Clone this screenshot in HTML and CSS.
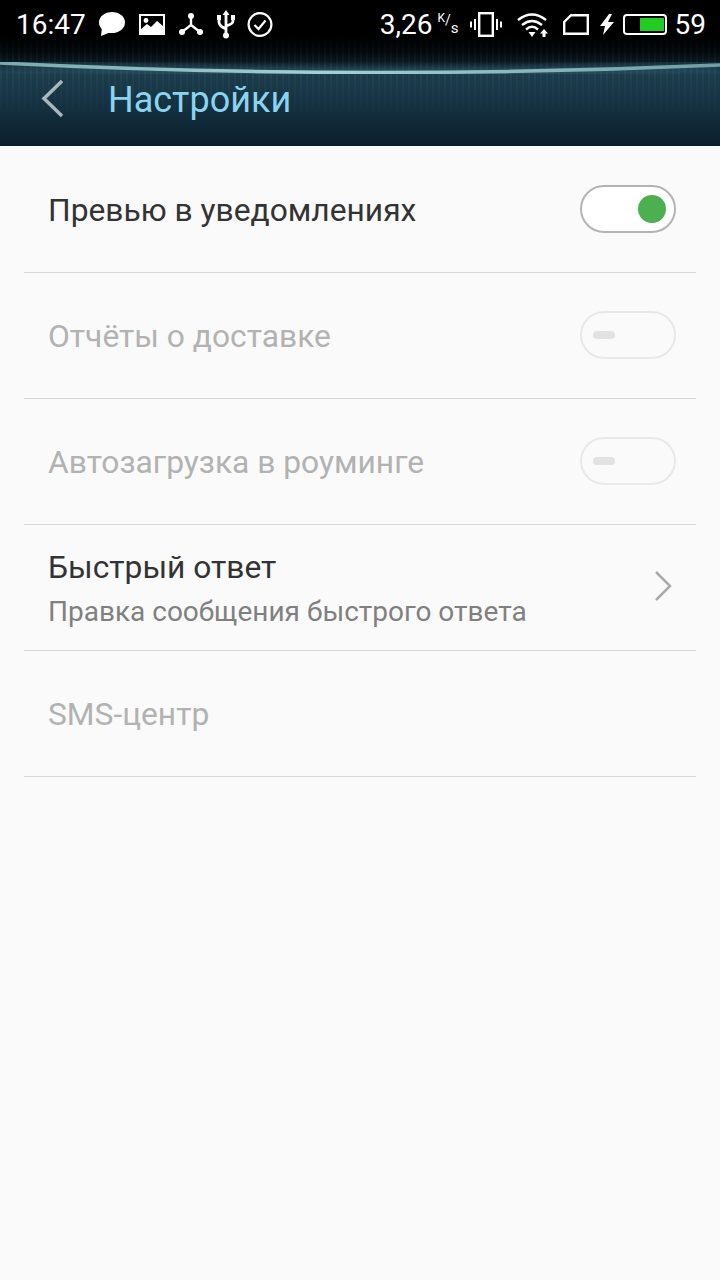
FILE: index.html
```html
<!DOCTYPE html>
<html lang="en">
<head>
    <meta charset="UTF-8">
    <meta name="viewport" content="width=device-width, initial-scale=1.0">
    <title>Настройки</title>
    <link rel="stylesheet" href="styles.css">
</head>
<body>

    <header class="header">
        <div class="streaks"></div>
        <svg class="glow" width="720" height="146" viewBox="0 0 720 146">
            <defs>
                <linearGradient id="ray" x1="0" x2="1" y1="0" y2="0">
                    <stop offset="0" stop-color="#78aab0"/>
                    <stop offset="0.45" stop-color="#a5d0d4"/>
                    <stop offset="1" stop-color="#6f9ea6"/>
                </linearGradient>
                <filter id="soft"><feGaussianBlur stdDeviation="5"/></filter>
                <filter id="softer"><feGaussianBlur stdDeviation="0.7"/></filter>
            </defs>
            <path d="M0 63 Q360 81 720 65" fill="none" stroke="#3f7286" stroke-opacity="0.6" stroke-width="6" filter="url(#soft)"/>
            <path d="M0 63 Q360 81 720 65" fill="none" stroke="url(#ray)" stroke-width="3.500" filter="url(#softer)"/>
        </svg>

        <div class="status-bar">
            <div class="status-left">
                <span class="clock">16:47</span>
                <svg class="icon" width="26" height="24" viewBox="0 0 26 24"><ellipse cx="13" cy="10.500" rx="13" ry="10.500" fill="#fff"/><path d="M3 15 L2 24 L12 20 Z" fill="#fff"/></svg>
                <svg class="icon" width="26" height="21" viewBox="0 0 26 21"><path fill="#fff" fill-rule="evenodd" d="M0 0H26V21H0ZM2 2V15L8 10L12 13L18 7L24 12V2Z"/><circle cx="7" cy="6.500" r="2.400" fill="#fff"/></svg>
                <svg class="icon" width="24" height="22" viewBox="0 0 24 22"><path d="M12 3V12L3 19M12 12L21 19" fill="none" stroke="#fff" stroke-width="2.400"/><circle cx="12" cy="3" r="3" fill="#fff"/><circle cx="3" cy="19" r="3" fill="#fff"/><circle cx="21" cy="19" r="3" fill="#fff"/></svg>
                <svg class="icon" width="18" height="29" viewBox="0 0 18 29"><path d="M9 3V26M2 9V12Q2 16 9 19M16 9V11Q16 14 9 16" fill="none" stroke="#fff" stroke-width="2.800"/><path d="M9 0L12.500 5H5.500Z" fill="#fff"/><rect x="0" y="5" width="4" height="5" fill="#fff"/><rect x="14" y="5" width="4" height="5" fill="#fff"/><circle cx="9" cy="25.500" r="3" fill="#fff"/></svg>
                <svg class="icon check" width="26" height="25" viewBox="0 0 26 25"><circle cx="13" cy="12.500" r="11.400" fill="none" stroke="#fff" stroke-width="2.200"/><path d="M7.500 13L11.500 17L18.500 8.500" fill="none" stroke="#fff" stroke-width="2.200"/></svg>
            </div>
            <div class="status-right">
                <span class="speed">3,26</span>
                <span class="speed-unit"><span class="unit-k">K</span>/<span class="unit-s">s</span></span>
                <svg class="icon vibrate" width="32" height="25" viewBox="0 0 32 25"><rect x="9.200" y="1.200" width="13.600" height="22.600" fill="none" stroke="#fff" stroke-width="2.400"/><path d="M5 7V18M1 9.500V15.500M27 7V18M31 9.500V15.500" stroke="#fff" stroke-width="2"/></svg>
                <svg class="icon wifi" width="32" height="25" viewBox="0 0 32 25"><path d="M1 8Q15 -3 29 8M5 13Q15 5 25 13M9 17.500Q15 12 21 17.500" fill="none" stroke="#fff" stroke-width="2.400"/><path d="M11.500 20H18.500L15 25Z" fill="#fff"/><path d="M27 17L31 21.500H28.500V25H25.500V21.500H23Z" fill="#fff"/></svg>
                <svg class="icon sim" width="26" height="21" viewBox="0 0 26 21"><path d="M8 1.200H24.800V19.800H1.200V8Z" fill="none" stroke="#fff" stroke-width="2.400"/></svg>
                <svg class="icon bolt" width="14" height="21" viewBox="0 0 14 21"><path d="M9 0L0 12H5L3 21L14 8H8L12 0Z" fill="#fff"/></svg>
                <div class="battery"><div class="battery-fill"></div></div>
                <span class="level">59</span>
            </div>
        </div>

        <div class="title-bar">
            <svg class="back" width="24" height="40" viewBox="0 0 24 40"><path d="M22 2L4 19.500L22 37" fill="none" stroke="#a9b6ba" stroke-width="3.500"/></svg>
            <h1 class="title">Настройки</h1>
        </div>
    </header>

    <main class="list">
        <div class="row">
            <span class="row-label">Превью в уведомлениях</span>
            <div class="switch switch-on"><span class="knob"></span></div>
        </div>
        <div class="row">
            <span class="row-label disabled">Отчёты о доставке</span>
            <div class="switch switch-off"><span class="dash"></span></div>
        </div>
        <div class="row">
            <span class="row-label disabled">Автозагрузка в роуминге</span>
            <div class="switch switch-off"><span class="dash"></span></div>
        </div>
        <div class="row">
            <div class="row-text">
                <span class="row-label">Быстрый ответ</span>
                <span class="row-sub">Правка сообщения быстрого ответа</span>
            </div>
            <svg class="chevron" width="18" height="32" viewBox="0 0 18 32"><path d="M2 2L16 16L2 30" fill="none" stroke="#aaa" stroke-width="2.500"/></svg>
        </div>
        <div class="row">
            <span class="row-label disabled">SMS-центр</span>
        </div>
    </main>

</body>
</html>
```

FILE: styles.css
```css
* {
    box-sizing: border-box;
}
body {
    margin: 0;
    height: 1280px;
    overflow: hidden;
    background: #fafafa;
    font-family: Roboto, "Noto Sans", sans-serif;
}
.header {
    position: relative;
    height: 146px;
    background: linear-gradient(#000 0, #000 36px, #04090d 52px, #0a1820 62px, #1c3d4d 72px, #163343 100px, #0c1f2c 146px);
    color: #fff;
}
.streaks {
    position: absolute;
    left: 0;
    right: 0;
    top: 34px;
    height: 84px;
    background: repeating-linear-gradient(90deg, rgba(130, 180, 200, 0.07) 0 2px, transparent 2px 6px);
    -webkit-mask-image: linear-gradient(transparent, #000 45%, transparent);
    mask-image: linear-gradient(transparent, #000 45%, transparent);
}
.glow {
    position: absolute;
    left: 0;
    top: 0;
}
.status-bar {
    position: relative;
    height: 48px;
    padding: 0 14px 0 16px;
    display: flex;
    justify-content: space-between;
    align-items: center;
}
.status-left,
.status-right {
    display: flex;
    align-items: center;
}
.status-left {
    gap: 14px;
}
.clock,
.speed,
.level {
    font-size: 28px;
}
.clock {
    margin-right: -1px;
}
.check {
    margin-left: -2px;
}
.speed-unit {
    margin-left: 5px;
    font-size: 14px;
    display: flex;
    width: 20px;
}
.unit-k {
    font-size: 12px;
    margin-top: -1px;
}
.unit-s {
    font-size: 15px;
    margin-top: 7px;
}
.vibrate {
    margin-left: 12px;
}
.wifi {
    margin-left: 15px;
}
.sim {
    margin-left: 14px;
}
.bolt {
    margin-left: 11px;
}
.battery {
    margin-left: 9px;
    width: 44px;
    height: 21px;
    border: 2px solid #fff;
    border-radius: 4px;
    padding: 2px 1px;
    display: flex;
    justify-content: flex-end;
}
.battery-fill {
    width: 24px;
    background: #22cc22;
}
.level {
    margin-left: 8px;
}
.title-bar {
    position: relative;
    height: 98px;
    padding: 6px 0 0 40px;
    display: flex;
    align-items: center;
}
.back {
    margin-top: -3px;
}
.title {
    margin: 0 0 0 44px;
    font-size: 36px;
    font-weight: 400;
    color: #8ad4f0;
}
.list {
    padding: 1px 24px 0;
}
.row {
    height: 126px;
    padding: 0 20px 0 24px;
    border-bottom: 1px solid #d6d6d6;
    display: flex;
    justify-content: space-between;
    align-items: center;
}
.row-text {
    display: flex;
    flex-direction: column;
    gap: 9px;
}
.row-label {
    margin-top: 2px;
    font-size: 31.750px;
    color: #333;
}
.row-label.disabled {
    color: #b2b2b2;
}
.row-sub {
    font-size: 28px;
    color: #808080;
}
.switch {
    width: 96px;
    height: 48px;
    margin-bottom: 2px;
    border-radius: 24px;
    border: 2px solid #b4b4b4;
    display: flex;
    align-items: center;
    background: #fff;
}
.switch-on {
    justify-content: flex-end;
    padding-right: 8px;
}
.switch-off {
    border-color: #e8e8e8;
    background: none;
    padding-left: 11px;
}
.knob {
    width: 28px;
    height: 28px;
    border-radius: 50%;
    background: #4caf50;
}
.dash {
    width: 22px;
    height: 8px;
    border-radius: 4px;
    background: #e2e2e2;
}
.chevron {
    margin-right: 4px;
    margin-bottom: 4px;
}
```
